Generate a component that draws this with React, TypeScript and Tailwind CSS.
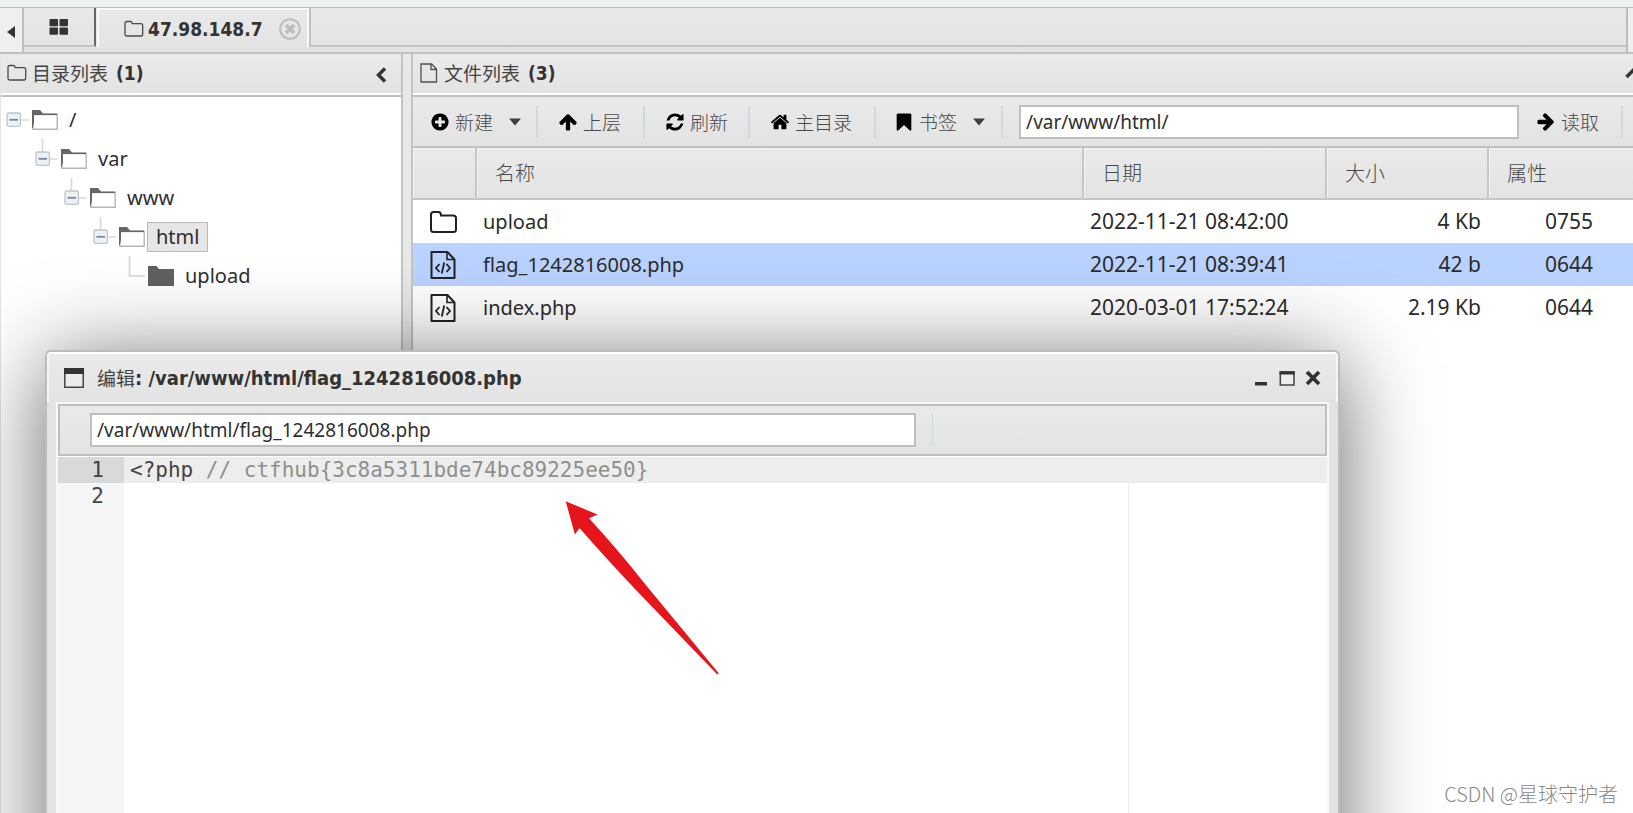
import React from "react";

const latin = "font-['Noto_Sans','Noto_Sans_CJK_SC',sans-serif]";
const strong = "font-['DejaVu_Sans_Condensed','DejaVu_Sans','Noto_Sans_CJK_SC',sans-serif] font-bold";
const cjk = "font-['Noto_Sans_CJK_SC',sans-serif] font-light";
const bar = "bg-linear-to-b from-[#eaeaea] to-[#e3e3e3]";

const paths = {
  plus: "M1344 960v-128q0-26-19-45t-45-19h-256v-256q0-26-19-45t-45-19h-128q-26 0-45 19t-19 45v256h-256q-26 0-45 19t-19 45v128q0 26 19 45t45 19h256v256q0 26 19 45t45 19h128q26 0 45-19t19-45v-256h256q26 0 45-19t19-45zm320-64q0 209-103 385.5t-279.5 279.5-385.5 103-385.5-103-279.5-279.5-103-385.5 103-385.5 279.5-279.5 385.5-103 385.5 103 279.5 279.5 103 385.5z",
  up: "M1675 971q0 51-37 90l-75 75q-38 38-91 38-54 0-90-38l-294-293v704q0 52-37.5 84.5t-90.5 32.5h-128q-53 0-90.5-32.5t-37.5-84.5v-704l-294 293q-36 38-90 38t-90-38l-75-75q-38-38-38-90 0-53 38-91l651-651q35-37 90-37 54 0 91 37l651 651q37 39 37 91z",
  refresh: "M1639 1056q0 5-1 7-64 268-268 434.5t-478 166.5q-146 0-282.5-55t-243.5-157l-129 129q-19 19-45 19t-45-19-19-45v-448q0-26 19-45t45-19h448q26 0 45 19t19 45-19 45l-137 137q71 66 161 102t187 36q134 0 250-65t186-179q11-17 53-117 8-23 30-23h192q13 0 22.5 9.5t9.5 22.5zm25-800v448q0 26-19 45t-45 19h-448q-26 0-45-19t-19-45 19-45l138-138q-148-137-349-137-134 0-250 65t-186 179q-11 17-53 117-8 23-30 23h-199q-13 0-22.5-9.5t-9.5-22.5v-7q65-268 270-434.5t480-166.5q146 0 284 55.5t245 156.5l130-129q19-19 45-19t45 19 19 45z",
  home: "M1472 992v480q0 26-19 45t-45 19h-384v-384h-256v384h-384q-26 0-45-19t-19-45v-480q0-1 .5-3t.5-3l575-474 575 474q1 2 1 6zm223-69l-62 74q-8 9-21 11h-3q-13 0-21-7l-692-577-692 577q-12 8-24 7-13-2-21-11l-62-74q-8-10-7-23.5t11-21.5l719-599q32-26 76-26t76 26l244 204v-195q0-14 9-23t23-9h192q14 0 23 9t9 23v408l219 182q10 8 11 21.5t-7 23.5z",
  bookmark: "M360 128h1072q50 0 85 30t35 75v1350q0 40-30 65-25 20-60 20-40 0-70-28l-496-480-496 480q-30 28-70 28-35 0-60-20-30-25-30-65V233q0-45 35-75t85-30z",
};

function Glyph({ name, className = "" }: { name: keyof typeof paths; className?: string }) {
  return (
    <svg viewBox="0 0 1792 1792" className={`size-5 shrink-0 fill-black ${className}`} aria-hidden="true">
      <path d={paths[name]} />
    </svg>
  );
}

function FolderOutline() {
  return (
    <svg viewBox="0 0 20 18" className="h-[18px] w-5 shrink-0" fill="none" stroke="#4a4a4a" strokeWidth="1.3" aria-hidden="true">
      <path d="M1 3.5Q1 1.5 3 1.5H6.5Q8 1.5 8.2 3.6H17Q18.7 3.6 18.7 5.4V14Q18.7 16 17 16H3Q1 16 1 14Z" />
    </svg>
  );
}

function Caret() {
  return (
    <svg viewBox="0 0 12 8" className="ml-4 h-2 w-3 shrink-0 fill-[#404040]" aria-hidden="true">
      <path d="M0 .5H12L6 7.5Z" />
    </svg>
  );
}

function ToolButton({ icon, label, caret, className = "", turn = "" }: { icon: keyof typeof paths; label: string; caret?: boolean; className?: string; turn?: string }) {
  return (
    <button type="button" className={`flex h-8 shrink-0 items-center ${className}`}>
      <Glyph name={icon} className={turn} />
      <span className={`ml-[5px] text-[19px] leading-8 whitespace-nowrap text-[#484848] ${cjk}`}>{label}</span>
      {caret && <Caret />}
    </button>
  );
}

function Separator() {
  return <span className="h-8 w-0.5 shrink-0 bg-[#cfdade]" />;
}

function TreeNode({ label, children, selected, leaf, root }: { label: string; children?: React.ReactNode; selected?: boolean; leaf?: boolean; root?: boolean }) {
  return (
    <li>
      <div className="flex h-[39px] items-center">
        <svg viewBox="0 0 26 39" className="h-[39px] w-[26px] shrink-0" fill="none" aria-hidden="true">
          {!root && <path d={leaf ? "M7.5 0V20H23" : "M7.5 0V14"} stroke="#d8d8d8" strokeWidth="1.6" />}
          {!leaf && (
            <>
              <path d="M15 20H23" stroke="#d8d8d8" strokeWidth="1.4" />
              <rect x="1" y="13" width="13.4" height="13.4" rx="1.8" fill="#edf1f4" stroke="#bcc6ce" strokeWidth="1.3" />
              <path d="M3.5 19.8H12" stroke="#71889c" strokeWidth="1.8" />
            </>
          )}
        </svg>
        <svg viewBox="0 0 26 20" className="h-5 w-[26px] shrink-0" aria-hidden="true">
          {leaf ? (
            <path d="M0 0H8.5L11 3H26V20H0Z" fill="#606060" />
          ) : (
            <>
              <path d="M.8 4.5H25.2V19.2H.8Z" fill="#fff" stroke="#b5b5b5" strokeWidth="1.4" />
              <path d="M0 0H8L11 3.5H25V5H2V13L.8 18H0Z" fill="#666" />
            </>
          )}
        </svg>
        <span
          className={`ml-0.5 border px-2 text-[20px] leading-7 text-[#2f2f2f] ${latin} ${selected ? "border-[#b8b8b8] bg-[#e6e6e6]" : "border-transparent"}`}
        >
          {label}
        </span>
      </div>
      {children && <ul className="pl-[29px]">{children}</ul>}
    </li>
  );
}

function FileIcon({ folder }: { folder?: boolean }) {
  return folder ? (
    <svg viewBox="0 0 28 28" className="size-7" fill="none" stroke="#222" strokeWidth="2" aria-hidden="true">
      <path d="M2 6.5Q2 4 4.500 4H9.500Q12 4 12 7.500H24Q27 7.500 27 10V21.500Q27 24 24.500 24H4.500Q2 24 2 21.500Z" />
    </svg>
  ) : (
    <svg viewBox="0 0 28 30" className="h-[30px] w-7" fill="none" stroke="#222" strokeWidth="2" aria-hidden="true">
      <path d="M2.500 2H18.500L25.500 9.500V28H2.500Z" strokeLinejoin="round" />
      <path d="M18 2V9.500H25" strokeWidth="1.6" />
      <path d="M10.500 14L7 18L10.500 22M17.500 14L21 18L17.500 22M15.200 12.500L12.800 23.500" strokeWidth="1.8" />
    </svg>
  );
}

const files = [
  { name: "upload", date: "2022-11-21 08:42:00", size: "4 Kb", mode: "0755", folder: true },
  { name: "flag_1242816008.php", date: "2022-11-21 08:39:41", size: "42 b", mode: "0644", active: true },
  { name: "index.php", date: "2020-03-01 17:52:24", size: "2.19 Kb", mode: "0644" },
];

function TabBar() {
  return (
    <header className={`flex h-[54px] shrink-0 flex-col border-b-2 border-[#c0c0c0] ${bar}`}>
      <div className="h-2 shrink-0 border-b border-[#bdbdbd] bg-[#ecf0ef]" />
      <div className="flex min-h-0 flex-1">
        <button type="button" aria-label="Scroll tabs left" className="flex w-6 shrink-0 items-center justify-center border-r-2 border-[#bfbfbf] bg-[#eeefee] pt-1">
          <svg viewBox="0 0 8 12" className="h-3 w-2 fill-[#333]" aria-hidden="true"><path d="M8 0V12L0 6Z" /></svg>
        </button>
        <button type="button" aria-label="Home" className="flex h-[39px] w-[72px] shrink-0 items-center justify-center border-r-2 border-b-2 border-r-[#666] border-b-[#c2c2c2]">
          <svg viewBox="0 0 20 16" className="h-4 w-5 fill-[#333]" aria-hidden="true">
            <rect x="0.500" y="0" width="8.500" height="7.200" rx="1" /><rect x="10.500" y="0" width="8.500" height="7.200" rx="1" />
            <rect x="0.500" y="8.600" width="8.500" height="7.200" rx="1" /><rect x="10.500" y="8.600" width="8.500" height="7.200" rx="1" />
          </svg>
        </button>
        <div className="ml-px flex h-[39px] w-[212px] shrink-0 items-center border-x-2 border-t-2 border-[#f9f9f9] pl-[25px]">
          <FolderOutline />
          <span className={`ml-1 text-[19px] leading-7 text-[#333] ${strong}`}>47.98.148.7</span>
          <button type="button" aria-label="Close tab" className="ml-4">
            <svg viewBox="0 0 22 22" className="size-[22px]" fill="none" stroke="#bdbdbd" aria-hidden="true">
              <circle cx="11" cy="11" r="9.800" strokeWidth="2" /><path d="M7 7L15 15M15 7L7 15" strokeWidth="3.500" />
            </svg>
          </button>
        </div>
        <div className="h-[39px] flex-1 border-b-2 border-l-2 border-[#c2c2c2]" />
        <div className="w-[7px] shrink-0 border-l-2 border-[#bdbdbd] bg-[#eeefee]" />
      </div>
    </header>
  );
}

function DirectoryPanel() {
  return (
    <aside className="flex w-[403px] shrink-0 flex-col border-r-2 border-l border-r-[#c4c4c4] border-l-[#e4e4e4] bg-white">
      <div className={`flex h-[43px] shrink-0 items-center border-b-2 border-[#bfbfbf] shadow-[inset_0_-2px_0_#fff] ${bar} pr-[14px] pb-1 pl-[6px]`}>
        <FolderOutline />
        <h2 className="ml-[5px] flex text-[19px] leading-8 text-[#444]">
          <span className="font-['Noto_Sans_CJK_SC',sans-serif] font-normal">目录列表</span>
          <span className={`ml-2 text-[#333] ${strong}`}>(1)</span>
        </h2>
        <button type="button" aria-label="Collapse" className="ml-auto pt-1">
          <svg viewBox="0 0 12 16" className="h-4 w-3" fill="none" stroke="#333" strokeWidth="3.500" aria-hidden="true"><path d="M10 1.500L3.500 8L10 14.500" /></svg>
        </button>
      </div>
      <ul className="pt-[3px] pl-[5px]">
        <TreeNode label="/" root>
          <TreeNode label="var">
            <TreeNode label="www">
              <TreeNode label="html" selected>
                <TreeNode label="upload" leaf />
              </TreeNode>
            </TreeNode>
          </TreeNode>
        </TreeNode>
      </ul>
    </aside>
  );
}

function FilePanel() {
  const head = `border-r-2 border-r-[#c6c6c6] border-b-2 border-b-[#c6c6c6] px-[18px] text-left text-[20px] text-[#484848] shadow-[inset_1px_1px_0_#f4f4f4] last:border-r-0 ${cjk}`;
  return (
    <main className="ml-2 flex min-w-0 flex-1 flex-col overflow-hidden border-l-2 border-[#c4c4c4] bg-white">
      <div className={`flex h-[43px] shrink-0 items-center border-b-2 border-[#bfbfbf] shadow-[inset_0_-2px_0_#fff] ${bar} pb-1 pl-[7px]`}>
        <svg viewBox="0 0 18 20" className="h-5 w-[18px] shrink-0" fill="none" stroke="#505050" strokeWidth="1.300" aria-hidden="true">
          <path d="M1 1H11.500L16.500 6V19H1ZM11 1V6.500H16.500" />
        </svg>
        <h2 className="ml-[6px] flex text-[19px] leading-8 text-[#444]">
          <span className="font-['Noto_Sans_CJK_SC',sans-serif] font-normal">文件列表</span>
          <span className={`ml-2 text-[#333] ${strong}`}>(3)</span>
        </h2>
        <button type="button" aria-label="Expand" className="-mr-2 ml-auto">
          <svg viewBox="0 0 16 12" className="h-3 w-4" fill="none" stroke="#333" strokeWidth="3.500" aria-hidden="true"><path d="M1.500 10L8 3.500L14.500 10" /></svg>
        </button>
      </div>
      <div className={`flex h-[51px] shrink-0 items-center border-b-2 border-[#c0c0c0] ${bar} pr-[10px] pl-[17px]`}>
        <ToolButton icon="plus" label="新建" caret className="mr-[15px]" />
        <Separator />
        <ToolButton icon="up" label="上层" className="mr-[22px] ml-5" />
        <Separator />
        <ToolButton icon="refresh" label="刷新" className="mx-5" />
        <Separator />
        <ToolButton icon="home" label="主目录" className="mr-[22px] ml-5" />
        <Separator />
        <ToolButton icon="bookmark" label="书签" caret className="mr-4 ml-[18px]" />
        <Separator />
        <input
          aria-label="Path"
          defaultValue="/var/www/html/"
          className={`ml-4 h-[34px] min-w-0 flex-1 border-2 border-[#bfbfbf] bg-white px-[5px] text-[19px] text-[#2f2f2f] outline-none ${latin}`}
        />
        <ToolButton icon="up" turn="rotate-90" label="读取" className="mr-[22px] ml-[17px]" />
        <Separator />
      </div>
      <table className="w-full table-fixed border-separate border-spacing-0">
        <colgroup>
          <col className="w-[64px]" /><col /><col className="w-[243px]" /><col className="w-[162px]" /><col className="w-[144px]" />
        </colgroup>
        <thead>
          <tr className={`h-[52px] ${bar}`}>
            <th aria-label="Type" className={head} />
            <th className={head}>名称</th>
            <th className={head}>日期</th>
            <th className={head}>大小</th>
            <th className={head}>属性</th>
          </tr>
        </thead>
        <tbody className={`text-[21px] leading-7 whitespace-nowrap text-[#2b2b2b] ${latin}`}>
          {files.map((f) => (
            <tr key={f.name} className={f.active ? "h-[43px] bg-[#bad2ff]" : "h-[43px]"}>
              <td className="p-0 pl-4"><FileIcon folder={f.folder} /></td>
              <td className="p-0 pl-[6px] text-[20px]">{f.name}</td>
              <td className="p-0 pb-0.5 pl-[6px]">{f.date}</td>
              <td className="p-0 pr-2 pb-0.5 text-right">{f.size}</td>
              <td className="p-0 pb-0.5 pl-[56px]">{f.mode}</td>
            </tr>
          ))}
        </tbody>
      </table>
    </main>
  );
}

function EditorWindow() {
  return (
    <section
      aria-label="Editor"
      className="absolute top-[350px] -bottom-[100px] left-[45px] flex w-[1295px] flex-col rounded-t-md border-2 border-[#bcbcbc] bg-[#e3e3e3] px-[9px] shadow-[0_12px_90px_rgba(0,0,0,0.6)]"
    >
      <div className={`-mx-[9px] flex h-[50px] shrink-0 items-center rounded-t-sm border-x-2 border-t-2 border-x-[#f6f6f6] border-t-white ${bar} pr-[14px] pb-px pl-[15px]`}>
        <svg viewBox="0 0 20 20" className="size-5 shrink-0" aria-hidden="true">
          <path d="M.8 2H19.200V19.200H.8Z" fill="#ececec" stroke="#444" strokeWidth="1.500" /><path d="M0 0H20V6H0Z" fill="#333" />
        </svg>
        <h2 className="ml-[13px] flex text-[20px] leading-8 text-[#333]">
          <span className="font-['Noto_Sans_CJK_SC',sans-serif] text-[19px] font-normal text-[#444]">编辑</span>
          <span className={`whitespace-pre ${strong}`}>: /var/www/html/flag_1242816008.php</span>
        </h2>
        <div className="ml-auto flex items-center gap-2">
          <button type="button" aria-label="Minimize">
            <svg viewBox="0 0 18 18" className="size-[18px]" aria-hidden="true"><path d="M3 13H15V16.500H3Z" fill="#333" /></svg>
          </button>
          <button type="button" aria-label="Maximize">
            <svg viewBox="0 0 18 18" className="size-[18px]" aria-hidden="true">
              <path d="M2.300 3H16V16H2.300Z" fill="#ececec" stroke="#444" strokeWidth="1.500" /><path d="M1.500 2.300H16.700V5.500H1.500Z" fill="#333" />
            </svg>
          </button>
          <button type="button" aria-label="Close">
            <svg viewBox="0 0 18 18" className="size-[18px]" aria-hidden="true"><path d="M3 3L15 15M15 3L3 15" stroke="#333" strokeWidth="3.800" /></svg>
          </button>
        </div>
      </div>
      <div className="flex min-h-0 flex-1 flex-col border-2 border-[#f8f8f8] bg-white">
        <div className={`mb-px flex h-[52px] shrink-0 items-center border-2 border-[#bfbfbf] ${bar} pl-[30px]`}>
          <input
            aria-label="File path"
            defaultValue="/var/www/html/flag_1242816008.php"
            className={`h-[34px] w-[826px] border-2 border-[#bfbfbf] bg-white px-[5px] text-[19px] text-[#2f2f2f] outline-none ${latin}`}
          />
          <span className="ml-4 h-8 w-px bg-[#cfdade]" />
        </div>
        <div className="relative flex min-h-0 flex-1 flex-col bg-linear-to-r from-[#f5f5f5] from-[66px] to-white to-[66px] font-['DejaVu_Sans_Mono',monospace] text-[21px] leading-[26px]">
          <div className="flex bg-[#ededed]">
            <span className="w-[66px] bg-[#d9d9d9] pr-5 text-right text-[#444]">1</span>
            <code className="pl-[6px] font-['DejaVu_Sans_Mono',monospace] whitespace-pre text-[#444]">
              {"<?php "}<span className="text-[#8e908c]">{"// ctfhub{3c8a5311bde74bc89225ee50}"}</span>
            </code>
          </div>
          <div className="flex">
            <span className="w-[66px] pr-5 text-right text-[#444]">2</span>
          </div>
          <span className="absolute top-[26px] right-[198px] bottom-0 w-px bg-[#ececec]" />
        </div>
      </div>
    </section>
  );
}

export default function App() {
  return (
    <div className="relative flex h-screen flex-col overflow-hidden bg-[#e8e8e8]">
      <TabBar />
      <div className="flex min-h-0 flex-1">
        <DirectoryPanel />
        <FilePanel />
      </div>
      <EditorWindow />
      <svg viewBox="0 0 154 174" className="pointer-events-none absolute top-[501px] left-[565px] h-[174px] w-[154px] fill-[#e5151b]" aria-hidden="true">
        <path d="M.7 .3L32.500 13.500L24 17.300Q54 50 80 83L153.700 172.300L152.300 173.500L70 88Q38 54 14.500 27L9.900 33.500Z" />
      </svg>
      <p className={`absolute right-[15px] bottom-1 text-[20px] leading-[30px] text-[#8a8a8a] ${cjk}`}>CSDN @星球守护者</p>
    </div>
  );
}
